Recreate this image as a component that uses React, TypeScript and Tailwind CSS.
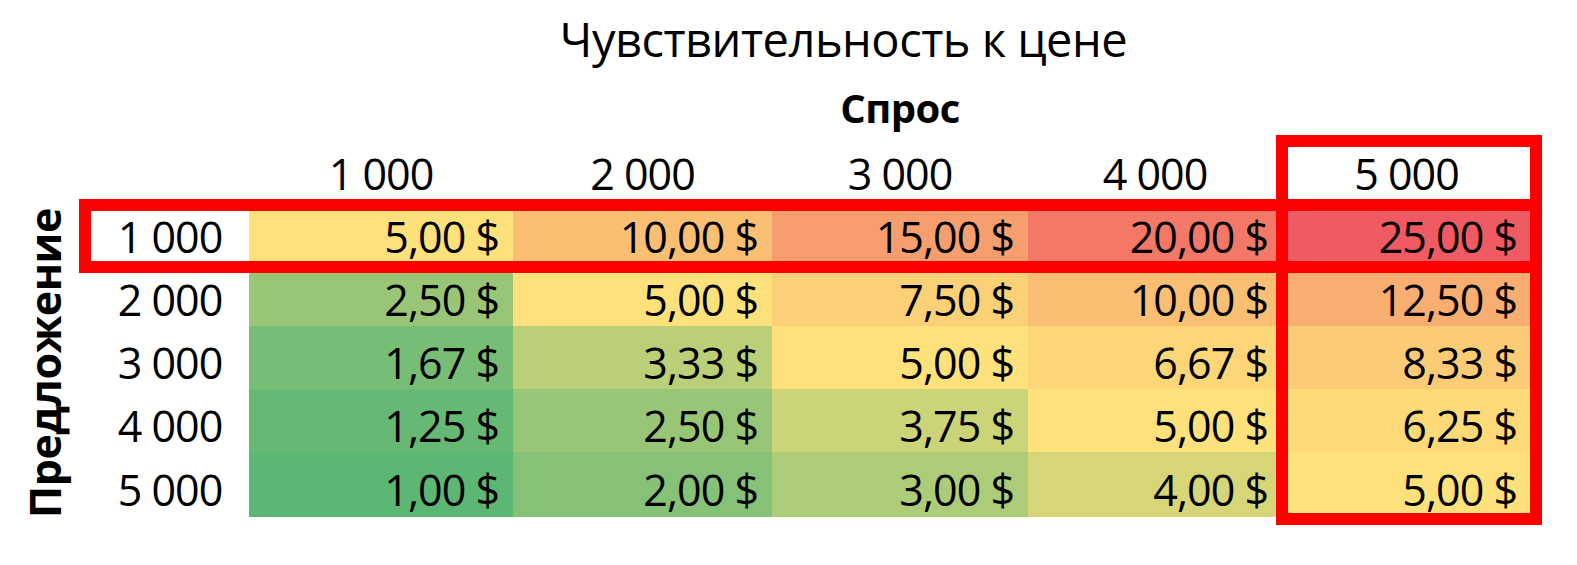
import React from 'react';

type Cell = { value: string; bg: string };

const cols = ['1 000', '2 000', '3 000', '4 000', '5 000'];
const colWidths = ['w-[264px]', 'w-[259px]', 'w-[256px]', 'w-[254px]', 'w-[249px]'];

// colours follow Excel's 3-colour scale (green -> yellow -> red)
const rows: { label: string; h: string; cells: Cell[] }[] = [
    {
        label: '1 000',
        h: 'h-[63px]',
        cells: [
            { value: '5,00 $', bg: 'bg-[#fee17a]' },
            { value: '10,00 $', bg: 'bg-[#fbbf74]' },
            { value: '15,00 $', bg: 'bg-[#f79e6e]' },
            { value: '20,00 $', bg: 'bg-[#f37867]' },
            { value: '25,00 $', bg: 'bg-[#f05a62]' },
        ],
    },
    {
        label: '2 000',
        h: 'h-[63px]',
        cells: [
            { value: '2,50 $', bg: 'bg-[#99c676]' },
            { value: '5,00 $', bg: 'bg-[#fee17a]' },
            { value: '7,50 $', bg: 'bg-[#fcd077]' },
            { value: '10,00 $', bg: 'bg-[#fbbf74]' },
            { value: '12,50 $', bg: 'bg-[#f9ae71]' },
        ],
    },
    {
        label: '3 000',
        h: 'h-[63px]',
        cells: [
            { value: '1,67 $', bg: 'bg-[#77bd75]' },
            { value: '3,33 $', bg: 'bg-[#bacf77]' },
            { value: '5,00 $', bg: 'bg-[#fee17a]' },
            { value: '6,67 $', bg: 'bg-[#fdd678]' },
            { value: '8,33 $', bg: 'bg-[#fccb76]' },
        ],
    },
    {
        label: '4 000',
        h: 'h-[63px]',
        cells: [
            { value: '1,25 $', bg: 'bg-[#66b974]' },
            { value: '2,50 $', bg: 'bg-[#99c676]' },
            { value: '3,75 $', bg: 'bg-[#cbd478]' },
            { value: '5,00 $', bg: 'bg-[#fee17a]' },
            { value: '6,25 $', bg: 'bg-[#fdd978]' },
        ],
    },
    {
        label: '5 000',
        h: 'h-[65px]',
        cells: [
            { value: '1,00 $', bg: 'bg-[#5cb674]' },
            { value: '2,00 $', bg: 'bg-[#85c176]' },
            { value: '3,00 $', bg: 'bg-[#adcc77]' },
            { value: '4,00 $', bg: 'bg-[#d6d679]' },
            { value: '5,00 $', bg: 'bg-[#fee17a]' },
        ],
    },
];

const App: React.FC = () => {
    return (
        <div className="relative w-[1577px] h-[565px] bg-white text-black overflow-hidden font-['Open_Sans',sans-serif]">
            {/* title */}
            <div className="flex h-[84px] items-center justify-center pl-[110px] pb-[6px]">
                <h1 className="text-[47px] leading-none font-normal tracking-[-0.5px]">Чувствительность к цене</h1>
            </div>
            <div className="flex h-[50px] items-center justify-center pl-[223px] pb-[2px]">
                <h2 className="text-[40px] leading-none font-bold tracking-[-0.5px]">Спрос</h2>
            </div>

            {/* column headers */}
            <div className="mt-[13px] flex h-[53px] pl-[249px]">
                {cols.map((c, i) => (
                    <div key={c} className={`${colWidths[i]} flex items-center justify-center text-[43px] leading-none tracking-[-1px]`}>
                        {c}
                    </div>
                ))}
            </div>

            <div className="flex">
                <div className="flex w-[91px] items-center justify-center pt-[8px] pr-[2px]">
                    <span className="[writing-mode:vertical-rl] rotate-180 whitespace-nowrap text-[43px] leading-none font-bold tracking-[-0.5px]">
                        Предложение
                    </span>
                </div>
                <div className="flex flex-col">
                    {rows.map(r => (
                        <div key={r.label} className={`flex ${r.h}`}>
                            <div className="flex w-[158px] items-center justify-center pt-[10px] text-[43px] leading-none tracking-[-1px]">
                                {r.label}
                            </div>
                            {r.cells.map((cell, i) => (
                                <div
                                    key={i}
                                    className={`${colWidths[i]} ${cell.bg} flex items-center justify-end pt-[10px] pr-[14px] text-[43px] leading-none tracking-[-1px]`}
                                >
                                    {cell.value}
                                </div>
                            ))}
                        </div>
                    ))}
                </div>
            </div>

            {/* highlight frames */}
            <div className="absolute left-[79px] top-[199px] w-[1463px] h-[74px] border-[12px] border-[#fe0000]" />
            <div className="absolute left-[1276px] top-[135px] w-[266px] h-[390px] border-[12px] border-[#fe0000]" />
        </div>
    );
};

export default App;
